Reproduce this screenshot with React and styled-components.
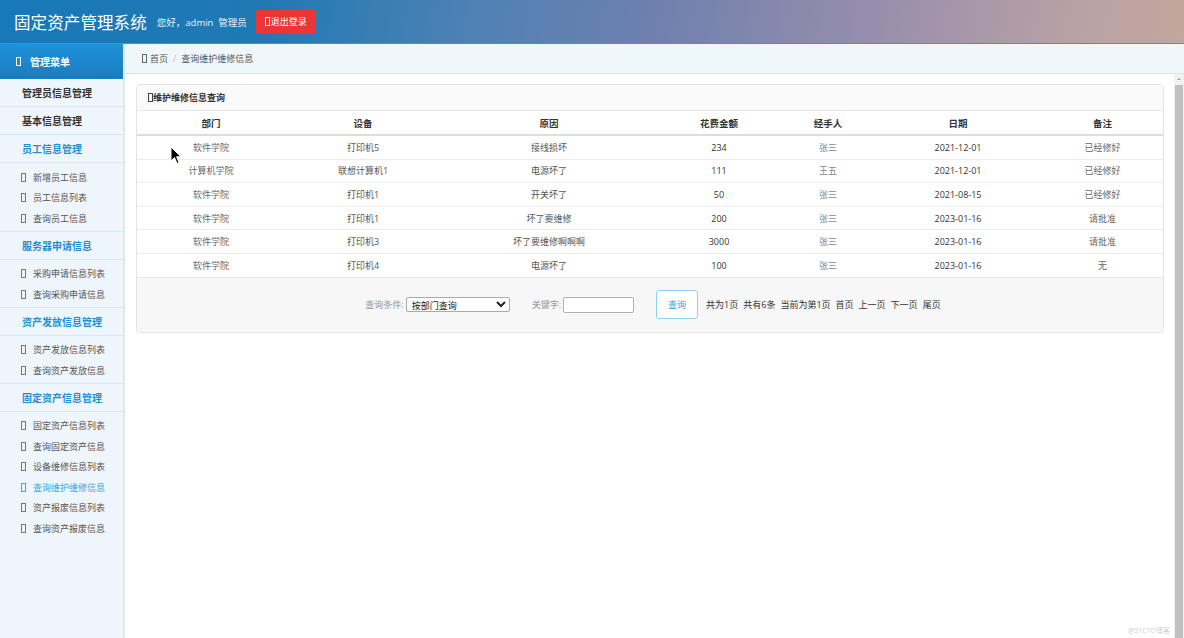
import React from 'react';
import styled, { createGlobalStyle } from 'styled-components';

const GlobalStyle = createGlobalStyle`
  html, body {
    margin: 0;
    padding: 0;
    background: #fff;
  }
  body {
    font-family: "Open Sans", "Noto Sans CJK SC", sans-serif;
    font-size: 9px;
    color: #333;
    overflow: hidden;
  }
`;

const menu = [
  { title: '管理员信息管理', items: [] },
  { title: '基本信息管理', items: [] },
  { title: '员工信息管理', blue: true, items: ['新增员工信息', '员工信息列表', '查询员工信息'] },
  { title: '服务器申请信息', blue: true, items: ['采购申请信息列表', '查询采购申请信息'] },
  { title: '资产发放信息管理', blue: true, items: ['资产发放信息列表', '查询资产发放信息'] },
  {
    title: '固定资产信息管理',
    blue: true,
    items: ['固定资产信息列表', '查询固定资产信息', '设备维修信息列表', '查询维护维修信息', '资产报废信息列表', '查询资产报废信息'],
  },
];

const columns = [
  { label: '部门', width: 148 },
  { label: '设备', width: 156 },
  { label: '原因', width: 216 },
  { label: '花费金额', width: 124 },
  { label: '经手人', width: 94 },
  { label: '日期', width: 166 },
  { label: '备注', width: 123 },
];

const rows = [
  ['软件学院', '打印机5', '接线损坏', '234', '张三', '2021-12-01', '已经修好'],
  ['计算机学院', '联想计算机1', '电源坏了', '111', '王五', '2021-12-01', '已经修好'],
  ['软件学院', '打印机1', '开关坏了', '50', '张三', '2021-08-15', '已经修好'],
  ['软件学院', '打印机1', '坏了要维修', '200', '张三', '2023-01-16', '请批准'],
  ['软件学院', '打印机3', '坏了要维修啊啊啊', '3000', '张三', '2023-01-16', '请批准'],
  ['软件学院', '打印机4', '电源坏了', '100', '张三', '2023-01-16', '无'],
];

const cellColors = ['#666', '#555', '#555', '#333', '#888', '#333', '#666'];

const App = () => {
  return (
    <>
      <GlobalStyle />
      <Page>
        <Header>
          <Title>固定资产管理系统</Title>
          <Greeting>您好，admin&nbsp;&nbsp;管理员</Greeting>
          <LogoutButton>
            <Tofu $color="#fff" $gap={1} />退出登录
          </LogoutButton>
        </Header>

        <Body>
          <Sidebar>
            <MenuTitle>
              <Tofu $color="#fff" />
              管理菜单
            </MenuTitle>
            {menu.map((group) => (
              <React.Fragment key={group.title}>
                <GroupTitle $blue={group.blue}>{group.title}</GroupTitle>
                {group.items.length > 0 && (
                  <GroupItems>
                    {group.items.map((item) => (
                      <MenuItem key={item} $active={item === '查询维护维修信息'}>
                        <Tofu $color={item === '查询维护维修信息' ? '#3aa3e0' : '#777'} />
                        {item}
                      </MenuItem>
                    ))}
                  </GroupItems>
                )}
              </React.Fragment>
            ))}
          </Sidebar>

          <Main>
            <Breadcrumb>
              <Tofu $color="#666" $gap={3} />
              <span>首页</span>
              <Slash>/</Slash>
              <span>查询维护维修信息</span>
            </Breadcrumb>

            <ContentRow>
              <Content>
                <Panel>
                  <PanelHeading>
                    <Tofu $color="#444" $gap={0} />维护维修信息查询
                  </PanelHeading>
                  <Table>
                    <colgroup>
                      {columns.map((c) => (
                        <col key={c.label} style={{ width: c.width }} />
                      ))}
                    </colgroup>
                    <thead>
                      <tr>
                        {columns.map((c) => (
                          <Th key={c.label}>{c.label}</Th>
                        ))}
                      </tr>
                    </thead>
                    <tbody>
                      {rows.map((r, i) => (
                        <tr key={i}>
                          {r.map((v, j) => (
                            <Td key={j} $color={cellColors[j]}>
                              {v}
                            </Td>
                          ))}
                        </tr>
                      ))}
                    </tbody>
                  </Table>
                  <PanelFooter>
                    <Field>
                      <FieldLabel>查询条件:</FieldLabel>
                      <Select defaultValue="dept">
                        <option value="dept">按部门查询</option>
                        <option value="device">按设备查询</option>
                      </Select>
                    </Field>
                    <Field>
                      <FieldLabel>关键字:</FieldLabel>
                      <KeywordInput type="text" />
                    </Field>
                    <SearchButton>查询</SearchButton>
                    <Pager>
                      <span>共为1页</span>
                      <span>共有6条</span>
                      <span>当前为第1页</span>
                      <span>首页</span>
                      <span>上一页</span>
                      <span>下一页</span>
                      <span>尾页</span>
                    </Pager>
                  </PanelFooter>
                </Panel>
              </Content>
              <ScrollBar>
                <ScrollArrow />
                <ScrollThumb />
              </ScrollBar>
            </ContentRow>
          </Main>
        </Body>

        <Cursor width="12" height="19" viewBox="0 0 12 19">
          <path d="M1 1 L1 15 L4.5 11.5 L7 17.5 L9 16.6 L6.6 10.8 L11 10.8 Z" fill="#000" stroke="#fff" strokeWidth="1" />
        </Cursor>
        <Watermark>@51CTO博客</Watermark>
      </Page>
    </>
  );
};

const Page = styled.div`
  position: relative;
  width: 100vw;
  height: 100vh;
  display: flex;
  flex-direction: column;
  overflow: hidden;
`;

const Header = styled.header`
  height: 44px;
  flex: none;
  display: flex;
  align-items: center;
  padding-left: 14px;
  background: linear-gradient(100deg, #1878b8 0%, #1f79b3 22%, #4f81b4 40%, #6e80ae 55%, #9a8fac 75%, #bba3a4 92%, #c3a69c 100%);
  border-bottom: 1px solid #5a8bb0;
  box-sizing: border-box;
`;

const Title = styled.h1`
  margin: 0;
  font-size: 16.5px;
  font-weight: 400;
  color: #fff;
  letter-spacing: 0.1px;
  font-family: "Noto Sans CJK SC", sans-serif;
`;

const Greeting = styled.span`
  margin-left: 10px;
  font-size: 9.5px;
  color: #eaf1f7;
`;

const LogoutButton = styled.button`
  margin-left: 9px;
  width: 60px;
  height: 24px;
  border: none;
  border-radius: 2px;
  background: #ee3535;
  color: #fff;
  font-family: "Noto Sans CJK SC", sans-serif;
  font-size: 9px;
  display: flex;
  align-items: center;
  justify-content: center;
  padding: 0;
`;

const Tofu = styled.span`
  display: inline-block;
  width: 3px;
  height: 7px;
  border: 1px solid ${(p) => p.$color};
  margin-right: ${(p) => (p.$gap === undefined ? 4 : p.$gap)}px;
  vertical-align: -1px;
  flex: none;
`;

const Body = styled.div`
  flex: 1;
  display: flex;
  min-height: 0;
`;

const Sidebar = styled.nav`
  width: 125px;
  flex: none;
  background: #eff6fb;
  border-right: 2px solid #dce9f2;
  box-sizing: border-box;
`;

const MenuTitle = styled.div`
  height: 35px;
  display: flex;
  align-items: center;
  padding-left: 16px;
  background: linear-gradient(180deg, #1e92d8 0%, #1a7cbf 100%);
  color: #fff;
  font-weight: 700;
  font-size: 10px;
  gap: 5px;
  & > span {
    margin-right: 4px;
  }
`;

const GroupTitle = styled.div`
  height: 27px;
  display: flex;
  align-items: center;
  padding-left: 22px;
  font-weight: 700;
  font-size: 10px;
  color: ${(p) => (p.$blue ? '#1f90d2' : '#333')};
  border-bottom: 1px solid #d6e6f0;
`;

const GroupItems = styled.div`
  padding: 4px 0 2px;
  border-bottom: 1px solid #d6e6f0;
  &:last-child {
    border-bottom: none;
  }
`;

const MenuItem = styled.div`
  height: 20.5px;
  display: flex;
  align-items: center;
  padding-left: 21px;
  font-size: 9px;
  color: ${(p) => (p.$active ? '#3aa3e0' : '#555')};
  & > span {
    margin-right: 7px;
  }
`;

const Main = styled.main`
  flex: 1;
  display: flex;
  flex-direction: column;
  min-width: 0;
`;

const Breadcrumb = styled.div`
  height: 29px;
  flex: none;
  display: flex;
  align-items: center;
  padding-left: 17px;
  background: #f0f7fb;
  border-bottom: 1px solid #d4e6ef;
  font-size: 9px;
  color: #555;
`;

const Slash = styled.span`
  color: #bbb;
  margin: 0 5px;
`;

const ContentRow = styled.div`
  flex: 1;
  display: flex;
  min-height: 0;
`;

const Content = styled.div`
  flex: 1;
  padding: 10px 10px 0 11px;
  min-width: 0;
`;

const Panel = styled.section`
  border: 1px solid #e3e3e3;
  border-radius: 4px;
  overflow: hidden;
  background: #fff;
`;

const PanelHeading = styled.div`
  height: 25px;
  display: flex;
  align-items: center;
  padding-left: 11px;
  background: #fafafa;
  border-bottom: 1px solid #e6e6e6;
  font-weight: 700;
  font-size: 9px;
  color: #333;
`;

const Table = styled.table`
  width: 100%;
  border-collapse: collapse;
  table-layout: fixed;
`;

const Th = styled.th`
  height: 23px;
  padding: 0;
  font-size: 9.5px;
  font-weight: 700;
  color: #333;
  text-align: center;
  border-bottom: 2px solid #dddddd;
`;

const Td = styled.td`
  height: 22.6px;
  padding: 0;
  text-align: center;
  font-size: 9px;
  color: ${(p) => p.$color};
  border-top: 1px solid #ececec;
`;

const PanelFooter = styled.div`
  height: 54px;
  display: flex;
  align-items: center;
  justify-content: center;
  padding-left: 6px;
  background: #f7f7f7;
  border-top: 1px solid #e6e6e6;
`;

const Field = styled.label`
  display: flex;
  align-items: center;
  margin-right: 22px;
`;

const FieldLabel = styled.span`
  font-size: 9px;
  color: #999;
  margin-right: 2px;
`;

const Select = styled.select`
  width: 104px;
  height: 15px;
  padding: 0 1px;
  font-size: 9px;
  font-family: "Noto Sans CJK SC", sans-serif;
  border: 1px solid #a9a9a9;
  border-radius: 2px;
  background: #fff;
  color: #222;
`;

const KeywordInput = styled.input`
  width: 65px;
  height: 12px;
  padding: 1px 2px;
  border: 1px solid #b0b0b0;
  border-radius: 2px;
  background: #fff;
`;

const SearchButton = styled.button`
  width: 42px;
  height: 29px;
  margin-right: 8px;
  padding: 0;
  border: 1px solid #8fd0f0;
  border-radius: 3px;
  background: #fff;
  color: #3aa3e0;
  font-size: 9px;
  font-family: "Noto Sans CJK SC", sans-serif;
`;

const Pager = styled.div`
  display: flex;
  gap: 5px;
  font-size: 9px;
  color: #333;
`;

const ScrollBar = styled.div`
  width: 10px;
  flex: none;
  display: flex;
  flex-direction: column;
  background: #f1f1f1;
`;

const ScrollArrow = styled.div`
  height: 11px;
  position: relative;
  &::after {
    content: '';
    position: absolute;
    left: 3px;
    top: 4px;
    border-left: 2px solid transparent;
    border-right: 2px solid transparent;
    border-bottom: 2px solid #a3a3a3;
  }
`;

const ScrollThumb = styled.div`
  flex: 1;
  margin: 0 1px;
  background: #c1c1c1;
`;

const Cursor = styled.svg`
  position: absolute;
  left: 170px;
  top: 146px;
  pointer-events: none;
`;

const Watermark = styled.div`
  position: absolute;
  right: 14px;
  bottom: 3px;
  font-size: 7px;
  color: #cfcfcf;
`;

export default App;
